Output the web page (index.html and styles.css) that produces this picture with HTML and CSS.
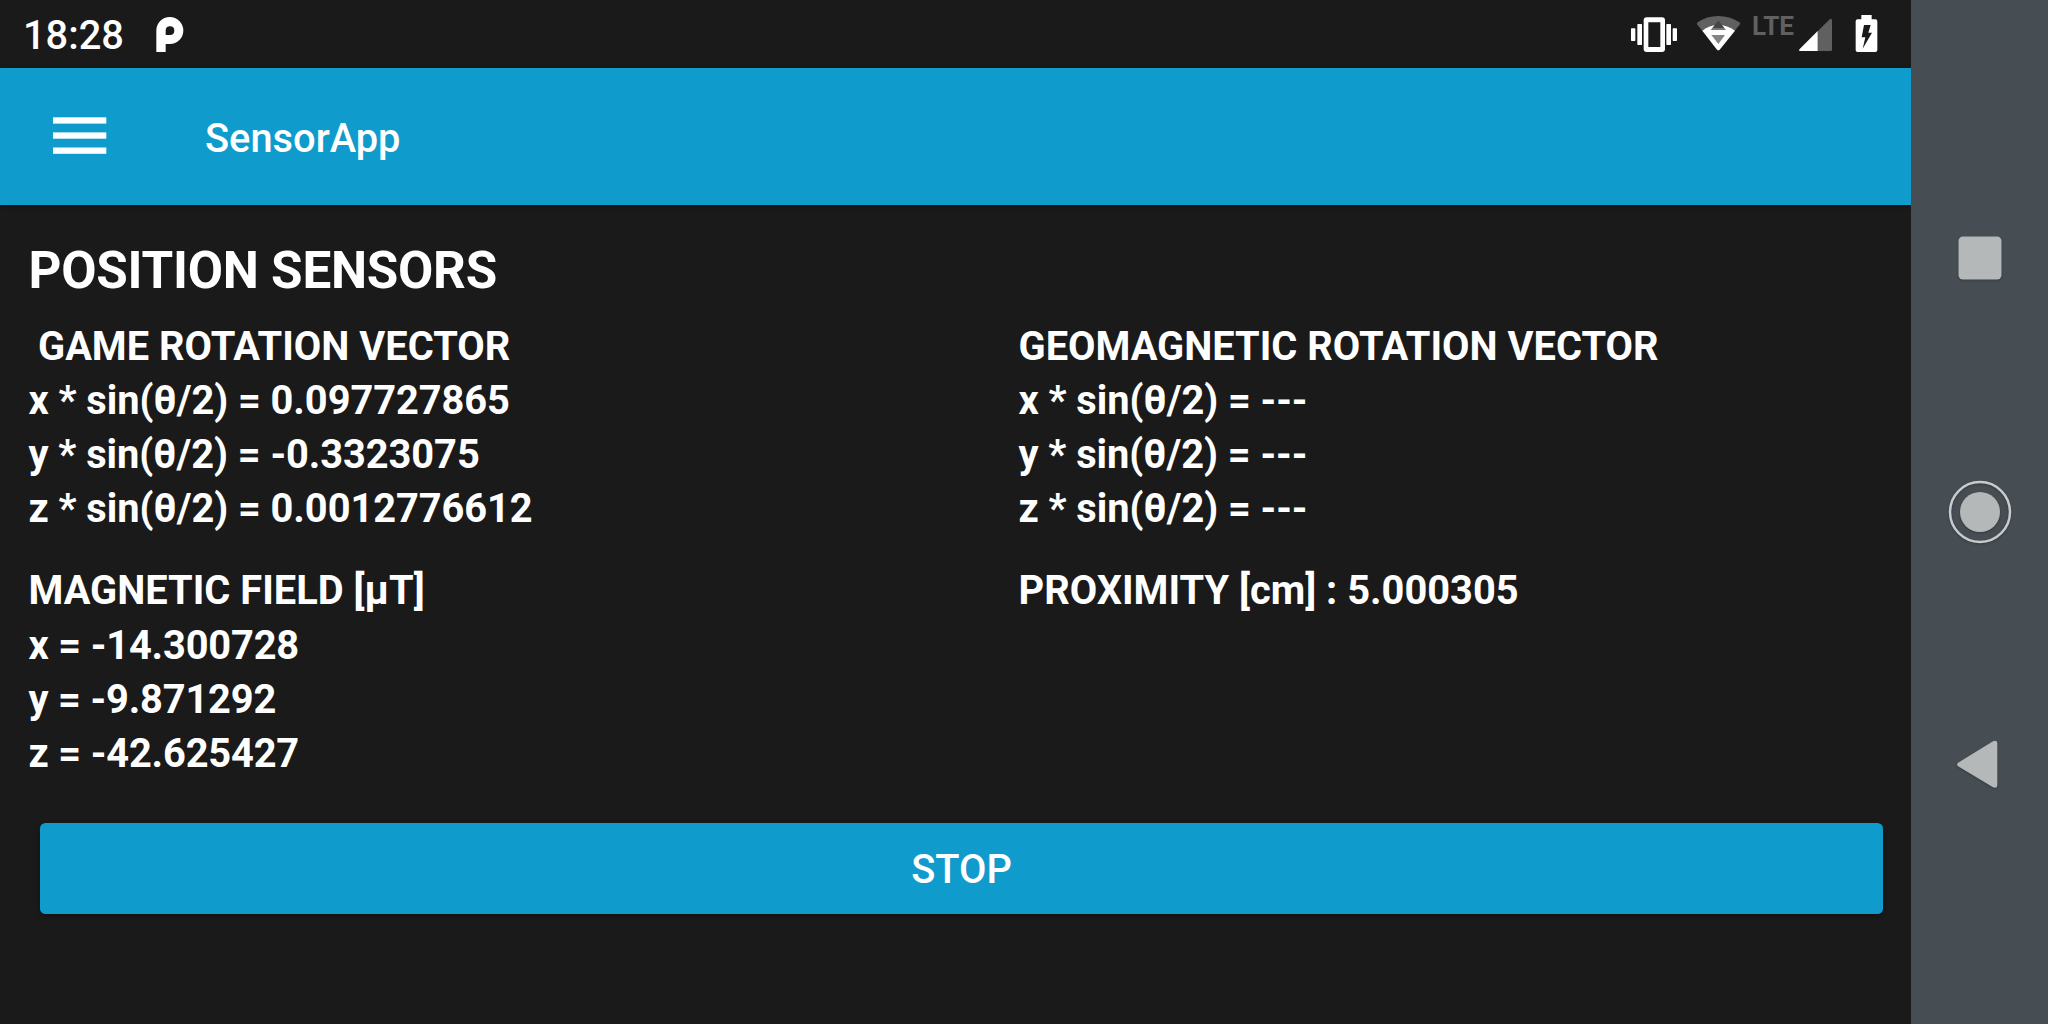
FILE: index.html
```html
<!DOCTYPE html>
<html lang="en">
<head>
<meta charset="utf-8">
<title>SensorApp</title>
<link rel="stylesheet" href="styles.css">
</head>
<body>
<div class="device">
  <div class="screen">
    <div class="status">
      <span class="clock">18:28</span>
      <svg class="pie" width="30" height="68" viewBox="465 0 90 204"><path d="M469 156V92a40.500 40.500 0 1 1 40.500 40H497V156Z" fill="#fff"/><path d="M497 105V91a13 13 0 1 1 13 14Z" fill="#1a1a1a"/></svg>
      <div class="indicators">
        <svg class="vibrate" width="48" height="68" viewBox="60 0 144 204" fill="#fff"><path fill-rule="evenodd" d="M110 52h46q9 0 9 9v86q0 9-9 9h-46q-9 0-9-9V61q0-9 9-9ZM115 67v74h36V67Z"/><rect x="63" y="85" width="13" height="38" rx="2"/><rect x="82" y="72" width="14" height="63" rx="2"/><rect x="169" y="72" width="14" height="63" rx="2"/><rect x="188" y="85" width="13" height="38" rx="2"/></svg>
        <svg class="wifi" width="45" height="68" viewBox="258 0 135 204"><path d="M325 150 262 74Q259 70 263 67Q291 48 325 48T388 67Q393 70 389 74Z" fill="#606060"/><path d="M277 92Q298 75 325 75T375 92L329 149Q325 153 321 149Z" fill="#fff"/><path d="M325 61 343 84H307Z" fill="#454545"/><path d="M307 84H343L348 90H302Z" fill="#777"/><path d="M304 105H345L325 132Z" fill="#858585"/></svg>
        <span class="lte">LTE</span>
        <svg class="signal" width="35" height="68" viewBox="564 0 105 204"><path d="M623 94 657 60Q666 52 666 62V149Q666 153 662 153H623Z" fill="#606060"/><path d="M623 93V153H572Q564 153 569 147Z" fill="#fff"/></svg>
        <svg class="battery" width="23" height="68" viewBox="735 0 69 204"><path d="M754 45h31v13h11q6 0 6 6v86q0 6-6 6h-53q-6 0-6-6V64q0-6 6-6h11Z" fill="#fff"/><path d="M762 75H782L775 98H786L758 146L766 112H755Z" fill="#1a1a1a"/></svg>
      </div>
    </div>
    <header class="appbar">
      <svg class="menu" width="54" height="38" viewBox="0 0 54 38" fill="#fff"><rect y="0.300" width="53.300" height="6.300"/><rect y="15.400" width="53.300" height="6.300"/><rect y="30.500" width="53.300" height="6.300"/></svg>
      <span class="title">SensorApp</span>
    </header>
    <main class="content">
      <h1 class="heading">POSITION SENSORS</h1>
      <div class="sensors">
        <section class="sensor">
          <h2 class="name indented">GAME ROTATION VECTOR</h2>
          <p class="value">x * sin(θ/2) = 0.097727865</p>
          <p class="value">y * sin(θ/2) = -0.3323075</p>
          <p class="value">z * sin(θ/2) = 0.0012776612</p>
        </section>
        <section class="sensor">
          <h2 class="name">GEOMAGNETIC ROTATION VECTOR</h2>
          <p class="value">x * sin(θ/2) = ---</p>
          <p class="value">y * sin(θ/2) = ---</p>
          <p class="value">z * sin(θ/2) = ---</p>
        </section>
        <section class="sensor">
          <h2 class="name">MAGNETIC FIELD [μT]</h2>
          <p class="value field">x = -14.300728</p>
          <p class="value field">y = -9.871292</p>
          <p class="value field">z = -42.625427</p>
        </section>
        <section class="sensor">
          <h2 class="name">PROXIMITY [cm] : 5.000305</h2>
        </section>
      </div>
      <button class="stop" type="button">STOP</button>
    </main>
  </div>
  <nav class="navbar">
    <svg class="key" width="70" height="70" viewBox="-35 -35 70 70"><rect x="-21.500" y="-21.500" width="43" height="43" rx="4.500"/></svg>
    <svg class="key" width="70" height="70" viewBox="-35 -35 70 70"><circle r="20"/><circle class="ring" r="30"/></svg>
    <svg class="key" width="70" height="70" viewBox="-35 -35 70 70"><path d="M-21.500-3.500 13-24.800Q17.300-26.500 17.300-22.500V18.500Q17.300 23 13 21.300L-21.500.5Q-24.500-1.500-21.500-3.500Z"/></svg>
  </nav>
</div>
</body>
</html>
```
FILE: styles.css
```css
body {
  margin: 0;
  background: #1a1a1a;
  color: #fff;
  font-family: Roboto, "Liberation Sans", sans-serif;
}

.device {
  display: flex;
  width: 2048px;
  height: 1024px;
  overflow: hidden;
}

.screen {
  width: 1911.3px;
  flex: none;
}

.status {
  display: flex;
  height: 68px;
  align-items: center;
  padding: 0 33.3px 0 23px;
}

.clock {
  width: 132px;
  font-size: 39.8px;
  font-weight: 500;
  line-height: 66px;
  padding-top: 4px;
}

.indicators {
  display: flex;
  margin-left: auto;
  align-items: flex-start;
}

.wifi {
  margin-left: 18px;
}

.lte {
  width: 46px;
  margin-left: 11px;
  padding-top: 11px;
  color: #606060;
  font-size: 26px;
  font-weight: 700;
  line-height: 30px;
}

.battery {
  margin-left: 22px;
}

.appbar {
  display: flex;
  box-sizing: border-box;
  height: 137px;
  align-items: center;
  padding-left: 53px;
  background: #0f9bcb;
  box-shadow: 0 1px 4px rgba(0, 0, 0, .35);
}

.menu {
  margin: 0 98px 2px 0;
}

.title {
  padding-top: 4px;
  font-size: 39.8px;
  font-weight: 500;
}

.content {
  padding: 36px 28.5px 0;
}

.heading {
  margin: 0 0 18.5px;
  font-size: 51.2px;
  font-weight: 700;
  line-height: 60px;
  letter-spacing: -.25px;
}

.sensors {
  display: grid;
  grid-template-columns: 990px 1fr;
  row-gap: 28.6px;
}

.name,
.value {
  margin: 0;
  font-size: 39.8px;
  font-weight: 700;
  line-height: 54.1px;
}

.indented {
  padding-left: 9.5px;
}

.value {
  letter-spacing: -.06px;
}

.field {
  letter-spacing: -.16px;
}

.stop {
  display: block;
  width: 1843px;
  height: 91px;
  margin: 42px 0 0 11.5px;
  padding: 3px 0 0;
  border: 0;
  border-radius: 5.5px;
  background: #0f9bcb;
  box-shadow: 0 2px 5px rgba(0, 0, 0, .35);
  color: #fff;
  font: 500 39.8px Roboto, "Liberation Sans", sans-serif;
}

.navbar {
  display: flex;
  flex: 1;
  flex-direction: column;
  align-items: center;
  justify-content: center;
  gap: 184px;
  background: #464d53;
}

.key {
  fill: #b4b8b9;
  filter: drop-shadow(0 1px 1px rgba(0, 0, 0, .25));
}

.ring {
  fill: none;
  stroke: #c8cbcc;
  stroke-width: 2.5;
}
```
